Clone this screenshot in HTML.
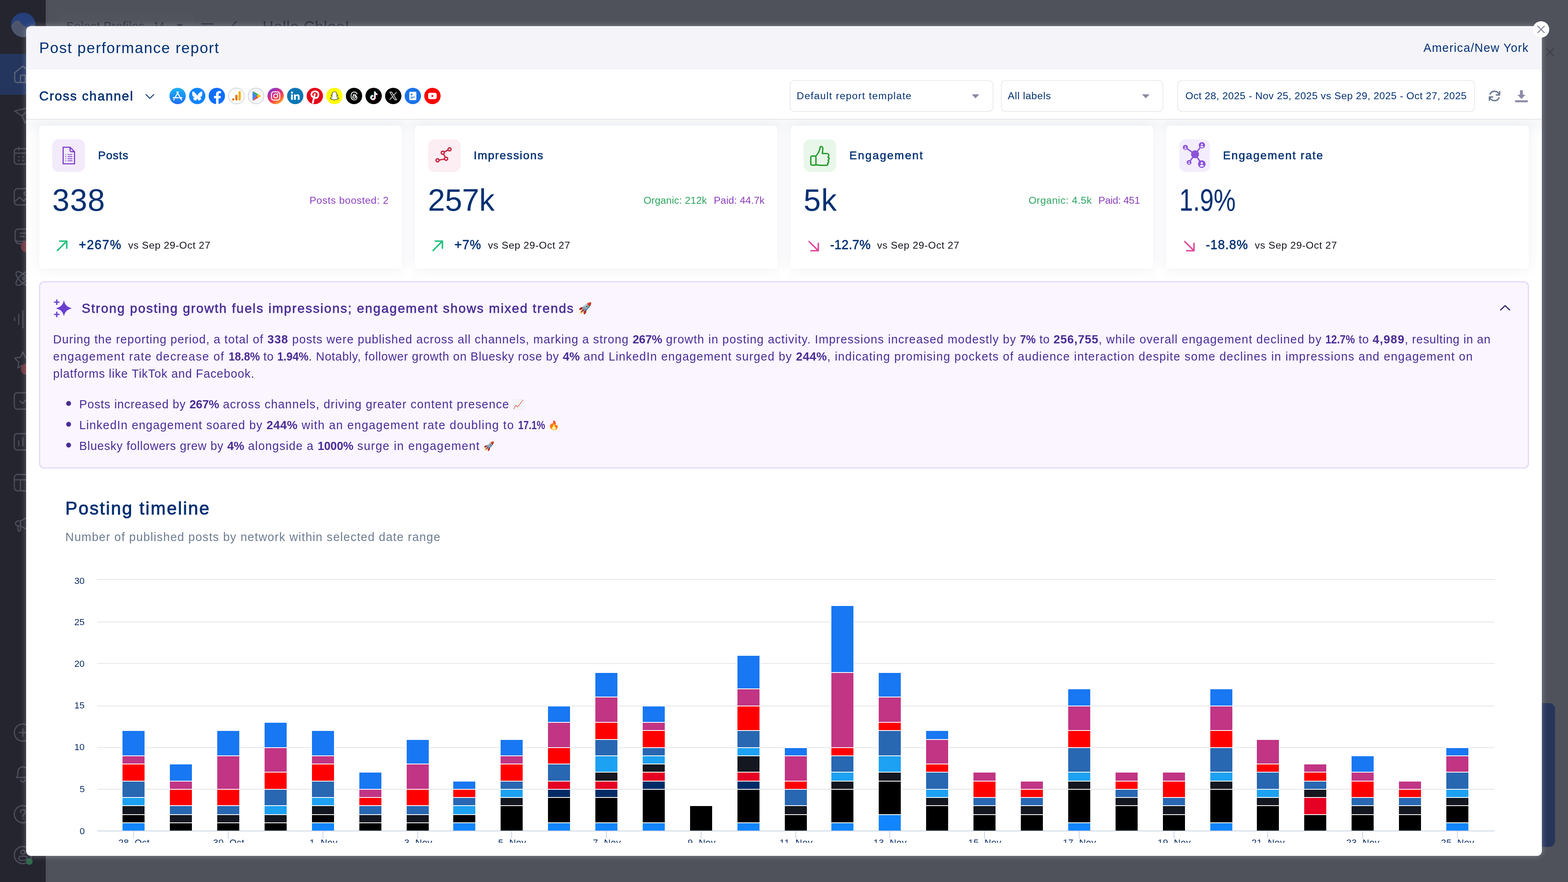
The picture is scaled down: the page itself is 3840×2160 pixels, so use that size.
<!DOCTYPE html>
<html lang="en">
<head>
<meta charset="utf-8">
<title>Post performance report</title>
<style>
*{box-sizing:border-box;margin:0;padding:0}
html,body{width:3840px;height:2160px;overflow:hidden}
body{position:relative;background:#4f525b;font-family:"Liberation Sans",sans-serif;color:#033072;-webkit-font-smoothing:antialiased}
.a{position:absolute;display:block}
.t{position:absolute;white-space:nowrap;font-weight:400;margin:0;will-change:transform}
b{font-weight:700}
ul{list-style:none}
#sidebar{left:0;top:0;width:112px;height:2160px;background:#24252f}
#modal{left:64px;top:64px;width:3712px;height:2032px;background:#fff;border-radius:12px;overflow:hidden;box-shadow:0 0 15px rgba(255,255,255,.30)}
#mc{left:-64px;top:-64px;width:3840px;height:2160px}
#hdr{left:0;top:1px;width:3712px;height:105px;background:#f4f4f9}
#bar{left:0;top:106px;width:3712px;height:123px;background:#fff;border-bottom:2px solid #e6e7ec}
#body{left:0;top:229px;width:3712px;height:1771px;overflow:hidden;background:linear-gradient(#f8f9fb,#f8f9fb 14px,#fff 40px)}
.card{position:absolute;top:15px;width:888px;height:350px;background:#fff;border-radius:8px;box-shadow:0 0 30px rgba(60,70,110,.09)}
.ib{position:absolute;left:32px;top:33px;width:80px;height:80px;border-radius:16px}
.sel{position:absolute;top:132px;height:78px;border:2px solid #eaebf0;border-radius:12px;background:#fff}
#ai{left:32px;top:396px;width:3648px;height:458px;background:#faf5ff;border:2px solid #dccdf7;border-radius:12px}
.g{position:absolute;left:174px;width:3422px;height:2px;background:#e6e6e6}
.sg{position:absolute;width:54px;box-shadow:0 0 0 2px #fff}
@media (min-resolution:1.5dppx) and (max-width:1920px){html{zoom:.5}}
</style>
</head>
<body>
<nav id="sidebar" class="a">
<div class="a" style="left:0;top:132px;width:112px;height:100px;background:#24355e"></div>
<svg class="a" style="left:27px;top:31px;border-radius:50%;background:#25407a;overflow:hidden" width="60" height="60" viewBox="0 0 60 60"><path d="M-1 33C7 21 15 15 21 21 29 31 37 39 45 33 51 28 57 29 63 35V63H-1Z" fill="#4c556b"/></svg>
<svg class="a" style="left:32px;top:158px" width="48" height="48" viewBox="0 0 48 48" fill="none" stroke="#5b6378" stroke-width="3" stroke-linecap="round" stroke-linejoin="round"><path d="M4 20 24 4l20 16v18a6 6 0 0 1-6 6H10a6 6 0 0 1-6-6z"/><path d="M18 44V28a2 2 0 0 1 2-2h8a2 2 0 0 1 2 2v16"/></svg>
<svg class="a" style="left:32px;top:258px" width="48" height="48" viewBox="0 0 48 48" fill="none" stroke="#4b4d5a" stroke-width="3" stroke-linecap="round" stroke-linejoin="round"><path d="M4 14 44 4 30 44 22 26z"/><path d="M22 26 44 4"/></svg>
<svg class="a" style="left:32px;top:358px" width="48" height="48" viewBox="0 0 48 48" fill="none" stroke="#4b4d5a" stroke-width="3" stroke-linecap="round" stroke-linejoin="round"><rect x="3" y="6" width="42" height="38" rx="7"/><path d="M3 17h42M14 2v8M34 2v8"/><g stroke-width="4"><path d="M14 26h.1M24 26h.1M34 26h.1M14 35h.1M24 35h.1M34 35h.1"/></g></svg>
<svg class="a" style="left:32px;top:458px" width="48" height="48" viewBox="0 0 48 48" fill="none" stroke="#4b4d5a" stroke-width="3" stroke-linecap="round" stroke-linejoin="round"><rect x="3" y="4" width="42" height="40" rx="8"/><circle cx="31" cy="16" r="4"/><path d="M4 36 16 25l10 9 6-5 12 10"/></svg>
<svg class="a" style="left:32px;top:558px" width="48" height="48" viewBox="0 0 48 48" fill="none" stroke="#4b4d5a" stroke-width="3" stroke-linecap="round" stroke-linejoin="round"><rect x="5" y="3" width="40" height="30" rx="7"/><path d="M17 13h18M17 21h10"/><path d="M5 26c0 8 4 13 10 13h8"/></svg>
<div class="a" style="left:51px;top:590px;width:28px;height:28px;border-radius:14px;background:#6d3540"></div>
<svg class="a" style="left:32px;top:658px" width="48" height="48" viewBox="0 0 48 48" fill="none" stroke="#4b4d5a" stroke-width="3" stroke-linecap="round" stroke-linejoin="round"><ellipse cx="24" cy="24" rx="22" ry="9" transform="rotate(45 24 24)"/><ellipse cx="24" cy="24" rx="22" ry="9" transform="rotate(-45 24 24)"/><circle cx="26" cy="24" r="3"/></svg>
<svg class="a" style="left:32px;top:758px" width="48" height="48" viewBox="0 0 48 48" fill="none" stroke="#4b4d5a" stroke-width="3" stroke-linecap="round" stroke-linejoin="round"><path d="M4 21v6M14 12v24M24 3v42M34 12v24M44 21v6"/></svg>
<svg class="a" style="left:32px;top:858px" width="48" height="48" viewBox="0 0 48 48" fill="none" stroke="#4b4d5a" stroke-width="3" stroke-linecap="round" stroke-linejoin="round"><path d="M24 4l6 13 14 2-10 10 2 14-12-7-12 7 2-14L4 19l14-2z"/></svg>
<div class="a" style="left:51px;top:890px;width:28px;height:28px;border-radius:14px;background:#6d3540"></div>
<svg class="a" style="left:32px;top:958px" width="48" height="48" viewBox="0 0 48 48" fill="none" stroke="#4b4d5a" stroke-width="3" stroke-linecap="round" stroke-linejoin="round"><rect x="3" y="4" width="42" height="40" rx="7"/><path d="M17 24l6 6 12-11"/></svg>
<svg class="a" style="left:32px;top:1058px" width="48" height="48" viewBox="0 0 48 48" fill="none" stroke="#4b4d5a" stroke-width="3" stroke-linecap="round" stroke-linejoin="round"><rect x="3" y="4" width="42" height="40" rx="7"/><path d="M14 34V22M24 34V14M34 34V26"/></svg>
<svg class="a" style="left:32px;top:1158px" width="48" height="48" viewBox="0 0 48 48" fill="none" stroke="#4b4d5a" stroke-width="3" stroke-linecap="round" stroke-linejoin="round"><rect x="3" y="4" width="42" height="40" rx="8"/><path d="M3 17h42M18 17v27"/></svg>
<svg class="a" style="left:32px;top:1258px" width="48" height="48" viewBox="0 0 48 48" fill="none" stroke="#4b4d5a" stroke-width="3" stroke-linecap="round" stroke-linejoin="round"><path d="M18 18 40 6v36L18 30z"/><path d="M18 18h-6a6 6 0 0 0 0 12h6z"/><path d="M12 30v10a3 3 0 0 0 6 0V30"/></svg>
<svg class="a" style="left:32px;top:1770px" width="48" height="48" viewBox="0 0 48 48" fill="none" stroke="#4b4d5a" stroke-width="3" stroke-linecap="round" stroke-linejoin="round"><circle cx="24" cy="24" r="21"/><path d="M24 15v18M15 24h18"/></svg>
<svg class="a" style="left:32px;top:1870px" width="48" height="48" viewBox="0 0 48 48" fill="none" stroke="#4b4d5a" stroke-width="3" stroke-linecap="round" stroke-linejoin="round"><path d="M8 34c4-4 4-8 4-14a12 12 0 0 1 24 0c0 6 0 10 4 14z"/><path d="M19 40a5 5 0 0 0 10 0"/></svg>
<svg class="a" style="left:32px;top:1970px" width="48" height="48" viewBox="0 0 48 48" fill="none" stroke="#4b4d5a" stroke-width="3" stroke-linecap="round" stroke-linejoin="round"><circle cx="24" cy="24" r="21"/><path d="M18 19a6 6 0 1 1 9 5c-2 1-3 2-3 5M24 34h.1"/></svg>
<svg class="a" style="left:32px;top:2070px" width="48" height="48" viewBox="0 0 48 48" fill="none" stroke="#4b4d5a" stroke-width="3" stroke-linecap="round" stroke-linejoin="round"><circle cx="24" cy="24" r="21"/><circle cx="24" cy="17" r="5"/><rect x="14" y="27" width="20" height="10" rx="5"/></svg>
<div class="a" style="left:64px;top:2102px;width:16px;height:16px;border-radius:8px;background:#2f6b4f"></div>
</nav>
<div class="a" style="left:145px;top:32px;width:330px;height:80px;border-radius:10px;background:#51545d"></div>
<div class="t" style="left:162.00px;top:43.00px;font-size:28.84px;line-height:42px;color:#2b2e3a;letter-spacing:0.528px;">Select Profiles</div>
<div class="t" style="left:375.50px;top:43.00px;font-size:28.84px;line-height:42px;color:#2b2e3a;transform:scaleX(0.8283);transform-origin:0 0;">14</div>
<svg class="a" style="left:431px;top:58px" width="18" height="11" viewBox="0 0 18 11"><path d="M1 1h16L9 10z" fill="#2b2e3a"/></svg>
<div class="a" style="left:493px;top:57px;width:30px;height:3px;background:#272d3d"></div>
<svg class="a" style="left:560px;top:50px" width="24" height="40" viewBox="0 0 24 40" fill="none" stroke="#272b39" stroke-width="2.600"><path d="M19 2 3 20"/></svg>
<div class="t" style="left:642.50px;top:38.44px;font-size:37.08px;line-height:54px;color:#272b39;letter-spacing:0.949px;">Hello Chloe!</div>
<svg class="a" style="left:3784px;top:116px" width="24" height="24" viewBox="0 0 24 24" fill="none" stroke="#3e414c" stroke-width="3" stroke-linecap="round"><path d="M3 3l18 18M21 3 3 21"/></svg>
<div class="a" style="left:3700px;top:1722px;width:108px;height:352px;border-radius:14px;background:#27355a"></div>
<main id="modal" class="a">
<header id="hdr" class="a">
</header>
<div id="bar" class="a"></div>
<div id="body" class="a">
<section class="card" style="left:32px"><div class="ib" style="background:#f3ebfb;width:80px"></div></section>
<section class="card" style="left:952px"><div class="ib" style="background:#fdeef3;width:80px"></div></section>
<section class="card" style="left:1872px"><div class="ib" style="background:#e9f7ea;width:80px"></div></section>
<section class="card" style="left:2792px"><div class="ib" style="background:#f3edfd;width:75px"></div></section>
<section id="ai" class="a"></section>
</div>
<div id="mc" class="a">
<h1 class="t" style="left:96.00px;top:89.74px;font-size:37.08px;line-height:54px;color:#033072;letter-spacing:1.82px;">Post performance report</h1>
<div class="t" style="left:3485.73px;top:95.80px;font-size:28.84px;line-height:42px;color:#033072;letter-spacing:1.416px;">America/New York</div>
<h2 class="t" style="left:96.00px;top:211.11px;font-size:32.0px;line-height:48px;color:#033072;letter-spacing:2.06px;-webkit-text-stroke:0.77px #033072;">Cross channel</h2>
<svg class="a" style="left:354px;top:227px" width="26" height="18" viewBox="0 0 26 18" fill="none" stroke="#033072" stroke-width="2.200" stroke-linecap="round" stroke-linejoin="round"><path d="M3.500 4.500 13 14l9.500-9.500"/></svg>
<svg class="a" style="left:415px;top:215px;border-radius:50%;background:linear-gradient(180deg,#1ab1f8,#1f6ff0)" width="40" height="40" viewBox="0 0 40 40"><g stroke="#fff" stroke-width="2.6" stroke-linecap="round" fill="none"><path d="M21.6 10.2 13.4 24.4M18.4 10.2l9 15.6M9.4 24.4h12.2M24.6 24.4h6M11.6 27.6l-1.2 2.1M27.6 26l2 3.6"/></g></svg>
<svg class="a" style="left:463px;top:215px;" width="40" height="40" viewBox="0 0 40 40"><circle cx="20" cy="20" r="20" fill="#1185fe"/><path fill="#fff" transform="translate(7.600 9.300) scale(.0437)" d="M123.121 33.664C188.241 82.553 258.281 181.680 284 234.873c25.719-53.192 95.759-152.320 160.879-201.210C491.866-1.611 568-28.906 568 57.947c0 17.346-9.945 145.713-15.778 166.555-20.275 72.453-94.155 90.933-159.875 79.748C507.222 323.800 536.444 388.560 473.333 453.320c-119.860 122.992-172.272-30.859-185.702-70.281-2.462-7.227-3.614-10.608-3.631-7.733-.017-2.875-1.169.506-3.631 7.733-13.430 39.422-65.842 193.273-185.702 70.281-63.111-64.760-33.890-129.520 80.986-149.071-65.720 11.185-139.600-7.295-159.875-79.748C9.945 203.659 0 75.291 0 57.946 0-28.906 76.135-1.612 123.121 33.664Z"/></svg>
<svg class="a" style="left:511px;top:215px;" width="40" height="40" viewBox="0 0 40 40"><circle cx="20" cy="20" r="20" fill="#0d6efd"/><path fill="#fff" d="M27.8 25.8l.9-5.800h-5.500v-3.700c0-1.600.8-3.100 3.300-3.100h2.500V8.300s-2.300-.4-4.500-.4c-4.600 0-7.600 2.800-7.600 7.800V20h-5v5.800h5V40c1 .15 2 .2 3.100.2s2.100-.1 3.100-.2V25.800z" transform="translate(1.200 0)"/></svg>
<svg class="a" style="left:559px;top:215px;" width="40" height="40" viewBox="0 0 40 40"><circle cx="20" cy="20" r="19.300" fill="#fff" stroke="#b9bdc9" stroke-width="1.200"/><rect x="25.200" y="8.200" width="5.400" height="23" rx="2.700" fill="#f9ab00"/><rect x="17.300" y="17" width="5.400" height="14.200" rx="2.700" fill="#e37400"/><circle cx="12.200" cy="28.500" r="2.700" fill="#e37400"/></svg>
<svg class="a" style="left:607px;top:215px;" width="40" height="40" viewBox="0 0 40 40"><circle cx="20" cy="20" r="19.300" fill="#f4f6fb" stroke="#b9bdc9" stroke-width="1.200"/><path d="M12 9.400 21.500 20 12 30.600c-.4-.3-.6-.8-.6-1.500V10.900c0-.7.2-1.200.6-1.500z" fill="#4285f4"/><path d="M12 9.400c.5-.4 1.300-.4 2.100.1l11.200 6.400-3.800 4.100z" fill="#34a853"/><path d="M25.300 15.900 30.600 19c1.200.7 1.200 1.700 0 2.400l-5.300 3.100L21.500 20z" fill="#fbbc04"/><path d="M25.300 24.500 14.100 30.900c-.8.500-1.600.5-2.100.1L21.500 20z" fill="#ea4335"/></svg>
<svg class="a" style="left:655px;top:215px;border-radius:50%;background:linear-gradient(325deg,#fdc33b 8%,#f6593a 32%,#d52d88 58%,#7a3fd6 92%)" width="40" height="40" viewBox="0 0 40 40"><rect x="9.800" y="9.800" width="20.400" height="20.400" rx="5.600" fill="none" stroke="#fff" stroke-width="2.300"/><circle cx="20" cy="20" r="4.900" fill="none" stroke="#fff" stroke-width="2.300"/><circle cx="25.700" cy="14.300" r="1.400" fill="#fff"/></svg>
<svg class="a" style="left:703px;top:215px;" width="40" height="40" viewBox="0 0 40 40"><circle cx="20" cy="20" r="20" fill="#0a76b4"/><g fill="#fff"><rect x="9.800" y="16.300" width="4.400" height="13.200"/><circle cx="12" cy="11.700" r="2.600"/><path d="M17 16.300h4.200v1.900c.7-1.300 2.300-2.300 4.500-2.300 4.200 0 5 2.700 5 6.300v7.300h-4.400v-6.400c0-1.600 0-3.500-2.200-3.500s-2.600 1.700-2.600 3.400v6.500H17z"/></g></svg>
<svg class="a" style="left:751px;top:215px;" width="40" height="40" viewBox="0 0 40 40"><circle cx="20" cy="20" r="20" fill="#e60019"/><g fill="none" stroke="#fff" stroke-linecap="round"><path d="M14.300 22.200C12.600 20.800 11.700 18.700 11.700 16.500 11.700 11.800 15.400 8.600 20.500 8.600 25.400 8.600 28.900 11.900 28.900 16.300 28.900 21.200 26.200 24.900 22.400 24.900 20.600 24.900 19.200 24 18.600 22.700" stroke-width="4.200"/><path d="M19.800 15.500 15.200 36.500" stroke-width="4.400"/></g></svg>
<svg class="a" style="left:799px;top:215px;" width="40" height="40" viewBox="0 0 40 40"><circle cx="20" cy="20" r="20" fill="#fffc00"/><path fill="#fff" stroke="#111" stroke-width="1.100" stroke-linejoin="round" d="M20 9.500c3.300 0 5.600 2.500 5.600 5.800 0 1-.05 1.900-.1 2.600.6.3 1.400-.3 2-.1.700.2.900.9.400 1.400-.6.600-1.700.8-2.100 1.300-.3.400.2 1.300.9 2.300.8 1.100 1.900 1.900 3.200 2.300.5.150.6.700.2 1-.7.500-1.800.7-2.600.9-.3.100-.2.900-.6 1.200-.5.400-1.500-.1-2.600.1-1.300.2-2.200 1.700-4.300 1.700s-3-1.500-4.300-1.700c-1.100-.2-2.100.3-2.600-.1-.4-.3-.3-1.100-.6-1.200-.8-.2-1.900-.4-2.600-.9-.4-.3-.3-.85.2-1 1.300-.4 2.400-1.200 3.200-2.300.7-1 1.200-1.900.9-2.300-.4-.5-1.500-.7-2.100-1.300-.5-.5-.3-1.200.4-1.400.6-.2 1.400.4 2 .1-.05-.7-.1-1.600-.1-2.600 0-3.300 2.300-5.800 5.600-5.800z"/></svg>
<svg class="a" style="left:847px;top:215px;" width="40" height="40" viewBox="0 0 40 40"><circle cx="20" cy="20" r="20" fill="#000"/><path fill="none" stroke="#fff" stroke-width="2" stroke-linecap="round" d="M27.300 15.200c-.9-3.200-3.300-5-6.900-5-4.900 0-7.700 3.500-7.700 9.800s2.800 9.800 7.700 9.800c4 0 6.700-2.300 6.700-5.400 0-3-2.400-4.700-5.800-4.700-2.700 0-4.500 1.200-4.500 3.100 0 1.700 1.400 2.800 3.400 2.800 2.700 0 4.200-1.900 4.200-5.300 0-2.600-1.200-4-3.500-4-1.400 0-2.500.6-3.100 1.600"/></svg>
<svg class="a" style="left:895px;top:215px;" width="40" height="40" viewBox="0 0 40 40"><circle cx="20" cy="20" r="20" fill="#000"/><path d="M21.600 9.500h3.200c.2 2.600 1.700 4.400 4.300 4.700v3.300c-1.600 0-3-.5-4.300-1.300v7.300c0 3.900-2.800 6.700-6.500 6.700-3.500 0-6.200-2.700-6.200-6.100 0-3.700 3.100-6.500 7-6v3.400c-1.900-.5-3.600.8-3.600 2.600 0 1.500 1.200 2.700 2.800 2.700 1.800 0 3.300-1.300 3.300-3.500z" fill="#25f4ee" transform="translate(-.8 -.7)"/><path d="M21.600 9.500h3.200c.2 2.600 1.700 4.400 4.300 4.700v3.300c-1.600 0-3-.5-4.300-1.300v7.300c0 3.900-2.800 6.700-6.500 6.700-3.500 0-6.200-2.700-6.200-6.100 0-3.700 3.100-6.500 7-6v3.400c-1.900-.5-3.600.8-3.600 2.600 0 1.500 1.200 2.700 2.800 2.700 1.800 0 3.300-1.300 3.300-3.500z" fill="#fe2c55" transform="translate(.8 .7)"/><path d="M21.600 9.500h3.200c.2 2.600 1.700 4.400 4.300 4.700v3.300c-1.600 0-3-.5-4.300-1.300v7.300c0 3.900-2.800 6.700-6.500 6.700-3.500 0-6.200-2.700-6.200-6.100 0-3.700 3.100-6.500 7-6v3.400c-1.900-.5-3.600.8-3.600 2.600 0 1.500 1.200 2.700 2.800 2.700 1.800 0 3.300-1.300 3.300-3.500z" fill="#fff"/></svg>
<svg class="a" style="left:943px;top:215px;" width="40" height="40" viewBox="0 0 40 40"><circle cx="20" cy="20" r="20" fill="#000"/><path fill="none" stroke="#fff" stroke-width="1.500" stroke-linejoin="miter" d="M11.700 10.500h4.600l12 19h-4.600zM11.200 29.500l7.600-8.600M21.400 18.300l6.900-7.800"/></svg>
<svg class="a" style="left:991px;top:215px;" width="40" height="40" viewBox="0 0 40 40"><circle cx="20" cy="20" r="20" fill="#1a73e8"/><rect x="11.400" y="9.800" width="17.200" height="20.400" rx="2.400" fill="#fff"/><circle cx="17" cy="16.400" r="2.200" fill="#1a73e8"/><rect x="14.600" y="22" width="10.400" height="1.800" fill="#1a73e8"/><rect x="14.600" y="25.300" width="5.400" height="1.500" fill="#1a73e8"/></svg>
<svg class="a" style="left:1039px;top:215px;" width="40" height="40" viewBox="0 0 40 40"><circle cx="20" cy="20" r="20" fill="#ff0000"/><rect x="9.400" y="12.300" width="21.200" height="15.400" rx="4.400" fill="#fff"/><path d="M18 16.700 23.800 20 18 23.300z" fill="#ff0000"/></svg>
<div class="sel a" style="left:1934px;top:196px;width:499px"></div>
<div class="t" style="left:1951.00px;top:216.63px;font-size:24.72px;line-height:36px;color:#033072;letter-spacing:1.337px;">Default report template</div>
<svg class="a" style="left:2380px;top:230px" width="18" height="11" viewBox="0 0 18 11"><path d="M1.500 1h15a.8.8 0 0 1 .6 1.300L9.600 10.300a.8.800 0 0 1-1.200 0L.9 2.300A.8.800 0 0 1 1.500 1z" fill="#8b8ba7"/></svg>
<div class="sel a" style="left:2451px;top:196px;width:398px"></div>
<div class="t" style="left:2468.00px;top:216.63px;font-size:24.72px;line-height:36px;color:#033072;letter-spacing:0.713px;">All labels</div>
<svg class="a" style="left:2797px;top:230px" width="18" height="11" viewBox="0 0 18 11"><path d="M1.500 1h15a.8.8 0 0 1 .6 1.300L9.600 10.300a.8.800 0 0 1-1.200 0L.9 2.300A.8.800 0 0 1 1.500 1z" fill="#8b8ba7"/></svg>
<div class="sel a" style="left:2883px;top:196px;width:729px"></div>
<div class="t" style="left:2902.50px;top:216.63px;font-size:24.72px;line-height:36px;color:#033072;letter-spacing:0.507px;">Oct 28, 2025 - Nov 25, 2025 vs Sep 29, 2025 - Oct 27, 2025</div>
<svg class="a" style="left:3644px;top:219px" width="32" height="32" viewBox="0 0 32 32" fill="none" stroke="#6b7990" stroke-width="3.300" stroke-linecap="round" stroke-linejoin="round"><path d="M27.800 13A12.300 12.300 0 0 0 5 11.500"/><path d="M4.200 19A12.300 12.300 0 0 0 27 20.500"/><path d="M28.500 5.500v8h-8"/><path d="M3.500 26.500v-8h8"/></svg>
<svg class="a" style="left:3709px;top:219px" width="34" height="34" viewBox="0 0 34 34"><path d="M13.500 2h7v11h6.200L17 23.500 7.300 13h6.200z" fill="#8b8ba7"/><rect x="1" y="26.500" width="32" height="5" rx="2.500" fill="#8b8ba7"/></svg>
<svg class="a" style="left:128px;top:341px" width="80" height="80" viewBox="0 0 80 80"><g fill="none" stroke="#8040c8" stroke-width="2.800" stroke-linejoin="miter"><path d="M26.700 19.700H43.600L54.500 30.500V60.100H26.700Z"/><path d="M43.600 19.700V27.500a3 3 0 0 0 3 3H54.500"/></g><g stroke="#8040c8" stroke-width="1.900"><path d="M37.600 37.400H49.400M37.600 42.500H49.400M37.600 47.700H49.400M37.600 52.800H49.400"/><path d="M32 37.400h2.200M32 42.500h2.200M32 47.700h2.200M32 52.800h2.200"/></g></svg>
<h3 class="t" style="left:240.00px;top:359.59px;font-size:28.0px;line-height:42px;color:#033072;letter-spacing:0.963px;-webkit-text-stroke:0.67px #033072;">Posts</h3>
<div class="t" style="left:128.00px;top:435.59px;font-size:75.6px;line-height:108px;color:#033072;letter-spacing:1.371px;">338</div>
<div class="t" style="left:757.91px;top:473.03px;font-size:24.72px;line-height:36px;color:#8a3fbc;letter-spacing:0.621px;">Posts boosted: 2</div>
<svg class="a" style="left:136px;top:586px" width="32" height="32" viewBox="0 0 32 32" fill="none" stroke="#1fbf7c" stroke-width="3.600" stroke-linecap="round" stroke-linejoin="round"><path d="M4.500 27.500 26.500 5.500M10 4.500h17.500V22"/></svg>
<div class="t" style="left:193.00px;top:576.35px;font-size:30.72px;line-height:48px;color:#033072;letter-spacing:1.735px;-webkit-text-stroke:0.77px #033072;">+267%</div>
<div class="t" style="left:314.18px;top:583.03px;font-size:24.72px;line-height:36px;color:#12141c;letter-spacing:0.665px;">vs Sep 29-Oct 27</div>
<svg class="a" style="left:1048px;top:341px" width="80" height="80" viewBox="0 0 80 80"><g fill="none" stroke="#c9223f" stroke-width="3.200"><circle cx="52.900" cy="24.700" r="3.800"/><circle cx="36.300" cy="32.900" r="3.800"/><circle cx="44.500" cy="47.800" r="3.800"/><circle cx="23.500" cy="51.700" r="3.800"/><path d="M49.500 26.400 39.700 31.200M38.100 36.200 42.700 44.500M40.800 48.500 27.200 51"/></g></svg>
<h3 class="t" style="left:1160.00px;top:359.59px;font-size:28.0px;line-height:42px;color:#033072;letter-spacing:1.895px;-webkit-text-stroke:0.67px #033072;">Impressions</h3>
<div class="t" style="left:1048.00px;top:435.59px;font-size:75.6px;line-height:108px;color:#033072;letter-spacing:-0.232px;">257k</div>
<div class="t" style="left:1747.54px;top:473.03px;font-size:24.72px;line-height:36px;color:#8a3fbc;letter-spacing:0.071px;">Paid: 44.7k</div>
<div class="t" style="left:1576.28px;top:473.03px;font-size:24.72px;line-height:36px;color:#2ba45f;letter-spacing:0.105px;">Organic: 212k</div>
<svg class="a" style="left:1056px;top:586px" width="32" height="32" viewBox="0 0 32 32" fill="none" stroke="#1fbf7c" stroke-width="3.600" stroke-linecap="round" stroke-linejoin="round"><path d="M4.500 27.500 26.500 5.500M10 4.500h17.500V22"/></svg>
<div class="t" style="left:1113.00px;top:576.35px;font-size:30.72px;line-height:48px;color:#033072;letter-spacing:1.279px;-webkit-text-stroke:0.77px #033072;">+7%</div>
<div class="t" style="left:1195.18px;top:583.03px;font-size:24.72px;line-height:36px;color:#12141c;letter-spacing:0.665px;">vs Sep 29-Oct 27</div>
<svg class="a" style="left:1968px;top:341px" width="80" height="80" viewBox="0 0 80 80"><g fill="none" stroke="#1e9a24" stroke-width="3.200" stroke-linejoin="round" stroke-linecap="round"><rect x="17.600" y="41.200" width="12.600" height="22.300" rx="3"/><path d="M30.500 40.500C36 34.500 39.800 27 40.300 20.500 40.500 18 41.800 17.400 43.300 17.700 46.300 18.300 47.600 21 47 25.500L45.800 35H56C60.300 35 62.200 37.600 61.700 40.400 61.400 42.200 60.700 43.200 59.700 43.600 61.700 44.400 62.500 46.400 62.100 48.400 61.800 50 61 51 59.900 51.400 61.200 52.400 61.700 53.900 61.300 55.600 60.900 57.300 60 58.300 58.700 58.600 59.500 59.600 59.700 60.800 59.200 61.900 58.500 63.500 56.700 63.800 54.200 63.800 46 64 37 63.800 30.500 62.600"/></g></svg>
<h3 class="t" style="left:2080.00px;top:359.59px;font-size:28.0px;line-height:42px;color:#033072;letter-spacing:2.324px;-webkit-text-stroke:0.67px #033072;">Engagement</h3>
<div class="t" style="left:1968.00px;top:435.59px;font-size:75.6px;line-height:108px;color:#033072;letter-spacing:1.225px;">5k</div>
<div class="t" style="left:2690.38px;top:473.03px;font-size:24.72px;line-height:36px;color:#8a3fbc;letter-spacing:-0.316px;">Paid: 451</div>
<div class="t" style="left:2519.20px;top:473.03px;font-size:24.72px;line-height:36px;color:#2ba45f;letter-spacing:0.628px;">Organic: 4.5k</div>
<svg class="a" style="left:1976px;top:586px" width="32" height="32" viewBox="0 0 32 32" fill="none" stroke="#e0479a" stroke-width="3.600" stroke-linecap="round" stroke-linejoin="round"><path d="M5.500 5.500 27.500 27.500M28 10v18H10"/></svg>
<div class="t" style="left:2033.00px;top:576.35px;font-size:30.72px;line-height:48px;color:#033072;letter-spacing:0.348px;-webkit-text-stroke:0.77px #033072;">-12.7%</div>
<div class="t" style="left:2148.42px;top:583.03px;font-size:24.72px;line-height:36px;color:#12141c;letter-spacing:0.665px;">vs Sep 29-Oct 27</div>
<svg class="a" style="left:2888px;top:341px" width="80" height="80" viewBox="0 0 80 80"><g stroke="#8c52d9" stroke-width="3.300" fill="none"><path d="M15 20 38.600 36.800M55.400 14.700 38.600 36.800M24 56.800 38.600 36.800M55.200 60.800 38.600 36.800"/></g><g fill="#8c52d9"><circle cx="38.600" cy="36.800" r="9.800"/><circle cx="15" cy="20" r="6.200"/><circle cx="55.400" cy="14.700" r="7.700"/><circle cx="24" cy="56.800" r="5.800"/><circle cx="55.200" cy="60.800" r="9.300"/></g><g fill="#f3edfd"><circle cx="15" cy="18.600" r="1.700"/><ellipse cx="15" cy="22.700" rx="3" ry="1.500"/><circle cx="55.400" cy="12.900" r="2.200"/><ellipse cx="55.400" cy="18.200" rx="3.900" ry="1.900"/><circle cx="24" cy="55.500" r="1.600"/><ellipse cx="24" cy="59.300" rx="2.800" ry="1.400"/><circle cx="55.200" cy="58.600" r="2.700"/><ellipse cx="55.200" cy="65" rx="4.700" ry="2.300"/></g></svg>
<h3 class="t" style="left:2995.00px;top:359.59px;font-size:28.0px;line-height:42px;color:#033072;letter-spacing:2.128px;-webkit-text-stroke:0.67px #033072;">Engagement rate</h3>
<div class="t" style="left:2888.00px;top:435.59px;font-size:75.6px;line-height:108px;color:#033072;transform:scaleX(0.8018);transform-origin:0 0;">1.9%</div>
<svg class="a" style="left:2896px;top:586px" width="32" height="32" viewBox="0 0 32 32" fill="none" stroke="#e0479a" stroke-width="3.600" stroke-linecap="round" stroke-linejoin="round"><path d="M5.500 5.500 27.500 27.500M28 10v18H10"/></svg>
<div class="t" style="left:2953.00px;top:576.35px;font-size:30.72px;line-height:48px;color:#033072;letter-spacing:1.089px;-webkit-text-stroke:0.77px #033072;">-18.8%</div>
<div class="t" style="left:3072.87px;top:583.03px;font-size:24.72px;line-height:36px;color:#12141c;letter-spacing:0.665px;">vs Sep 29-Oct 27</div>
<svg class="a" style="left:130px;top:731px" width="48" height="48" viewBox="0 0 48 48"><path d="M26.500 4C28.500 14.500 33.500 20.500 46 24 33.500 27.500 28.500 33.500 26.500 44 24.500 33.500 19.500 27.500 7 24 19.500 20.500 24.500 14.500 26.500 4z" fill="#6a3fd0"/><g stroke="#6a3fd0" stroke-width="3.200" stroke-linecap="round"><path d="M9 3.500v11M3.500 9h11M9 33.500v11M3.500 39h11"/></g></svg>
<h2 class="t" style="left:200.00px;top:731.41px;font-size:32.0px;line-height:48px;color:#4a2c96;letter-spacing:2.168px;-webkit-text-stroke:0.77px #4a2c96;">Strong posting growth fuels impressions; engagement shows mixed trends</h2>
<span class="t" style="left:1415.5px;top:737px;font-size:27px;line-height:36px">🚀</span>
<svg class="a" style="left:3671px;top:743px" width="30" height="22" viewBox="0 0 30 22" fill="none" stroke="#33257a" stroke-width="3" stroke-linecap="round" stroke-linejoin="round"><path d="M4 16 15 5.500 26 16"/></svg>
<p class="t" style="left:130px;top:810.00px;font-size:28.84px;line-height:42px;color:#4a2c96"><span style="letter-spacing:1.179px">During the reporting period, a total of </span><b style="letter-spacing:1.143px">338</b><span style="letter-spacing:1.202px"> posts were published across all channels, marking a strong </span><b style="letter-spacing:-0.303px">267%</b><span style="letter-spacing:1.309px"> growth in posting activity. Impressions increased modestly by </span><b style="display:inline-block;transform:scaleX(0.9250);transform-origin:0 50%;margin-right:-3.13px">7%</b><span style="letter-spacing:0.747px"> to </span><b style="letter-spacing:0.899px">256,755</b><span style="letter-spacing:1.314px">, while overall engagement declined by </span><b style="display:inline-block;transform:scaleX(0.8810);transform-origin:0 50%;margin-right:-9.73px">12.7%</b><span style="letter-spacing:0.747px"> to </span><b style="letter-spacing:1.302px">4,989</b><span style="letter-spacing:0.894px">, resulting in an</span><br><span style="letter-spacing:1.603px">engagement rate decrease of </span><b style="display:inline-block;transform:scaleX(0.9372);transform-origin:0 50%;margin-right:-5.14px">18.8%</b><span style="letter-spacing:0.747px"> to </span><b style="display:inline-block;transform:scaleX(0.9375);transform-origin:0 50%;margin-right:-5.11px">1.94%</b><span style="letter-spacing:0.895px">. Notably, follower growth on Bluesky rose by </span><b style="letter-spacing:0.019px">4%</b><span style="letter-spacing:1.299px"> and LinkedIn engagement surged by </span><b style="letter-spacing:0.635px">244%</b><span style="letter-spacing:1.43px">, indicating promising pockets of audience interaction despite some declines in impressions and engagement on</span><br><span style="letter-spacing:1.005px">platforms like TikTok and Facebook.</span></p>
<ul>
<li class="t" style="left:194px;top:969.00px;font-size:28.84px;line-height:42px;color:#4a2c96"><span style="letter-spacing:0.971px">Posts increased by </span><b style="letter-spacing:-0.303px">267%</b><span style="letter-spacing:1.305px"> across channels, driving greater content presence</span><span style="font-size:21.500px;margin-left:8px;position:relative;top:-2px">📈</span></li>
<div class="a" style="left:162px;top:982px;width:12px;height:12px;border-radius:6px;background:#4a2c96"></div>
<li class="t" style="left:194px;top:1020.00px;font-size:28.84px;line-height:42px;color:#4a2c96"><span style="letter-spacing:1.296px">LinkedIn engagement soared by </span><b style="letter-spacing:0.635px">244%</b><span style="letter-spacing:1.557px"> with an engagement rate doubling to </span><b style="display:inline-block;transform:scaleX(0.8084);transform-origin:0 50%;margin-right:-15.67px">17.1%</b><span style="font-size:21.500px;margin-left:8px;position:relative;top:-2px">🔥</span></li>
<div class="a" style="left:162px;top:1033px;width:12px;height:12px;border-radius:6px;background:#4a2c96"></div>
<li class="t" style="left:194px;top:1071.00px;font-size:28.84px;line-height:42px;color:#4a2c96"><span style="letter-spacing:0.878px">Bluesky followers grew by </span><b style="letter-spacing:0.019px">4%</b><span style="letter-spacing:1.245px"> alongside a </span><b style="display:inline-block;transform:scaleX(0.9756);transform-origin:0 50%;margin-right:-2.19px">1000%</b><span style="letter-spacing:1.563px"> surge in engagement</span><span style="font-size:21.500px;margin-left:8px;position:relative;top:-2px">🚀</span></li>
<div class="a" style="left:162px;top:1084px;width:12px;height:12px;border-radius:6px;background:#4a2c96"></div>
</ul>
<h2 class="t" style="left:160.00px;top:1212.25px;font-size:44.0px;line-height:66px;color:#033072;letter-spacing:2.796px;-webkit-text-stroke:1.06px #033072;">Posting timeline</h2>
<p class="t" style="left:160.00px;top:1294.00px;font-size:28.84px;line-height:42px;color:#6c7b90;letter-spacing:1.365px;">Number of published posts by network within selected date range</p>
<div id="chart" class="a" style="left:0;top:0;width:3840px;height:2064px;overflow:hidden">
<div class="g" style="left:238px;top:1418px"></div>
<div class="g" style="left:238px;top:1522px"></div>
<div class="g" style="left:238px;top:1624px"></div>
<div class="g" style="left:238px;top:1728px"></div>
<div class="g" style="left:238px;top:1830px"></div>
<div class="g" style="left:238px;top:1932px"></div>
<div class="t" style="left:182.33px;top:1405.64px;font-size:22.66px;line-height:33px;color:#0b2c66;letter-spacing:-0.019px;">30</div>
<div class="t" style="left:182.33px;top:1507.34px;font-size:22.66px;line-height:33px;color:#0b2c66;letter-spacing:-0.019px;">25</div>
<div class="t" style="left:182.33px;top:1609.34px;font-size:22.66px;line-height:33px;color:#0b2c66;letter-spacing:-0.019px;">20</div>
<div class="t" style="left:182.33px;top:1711.14px;font-size:22.66px;line-height:33px;color:#0b2c66;letter-spacing:-0.019px;">15</div>
<div class="t" style="left:182.33px;top:1813.34px;font-size:22.66px;line-height:33px;color:#0b2c66;letter-spacing:-0.019px;">10</div>
<div class="t" style="left:194.92px;top:1915.94px;font-size:22.66px;line-height:33px;color:#0b2c66;letter-spacing:-0.019px;">5</div>
<div class="t" style="left:194.92px;top:2019.04px;font-size:22.66px;line-height:33px;color:#0b2c66;letter-spacing:-0.019px;">0</div>
<i class="sg a" style="left:300px;top:2016px;height:18px;background:#1185fe"></i><i class="sg a" style="left:300px;top:1996px;height:18px;background:#000000"></i><i class="sg a" style="left:300px;top:1974px;height:20px;background:#14171f"></i><i class="sg a" style="left:300px;top:1954px;height:18px;background:#1da1f2"></i><i class="sg a" style="left:300px;top:1914px;height:38px;background:#2867b2"></i><i class="sg a" style="left:300px;top:1872px;height:40px;background:#ff0000"></i><i class="sg a" style="left:300px;top:1852px;height:18px;background:#c13584"></i><i class="sg a" style="left:300px;top:1790px;height:60px;background:#1877f2"></i>
<i class="sg a" style="left:416px;top:2016px;height:18px;background:#000000"></i><i class="sg a" style="left:416px;top:1996px;height:18px;background:#14171f"></i><i class="sg a" style="left:416px;top:1974px;height:20px;background:#2867b2"></i><i class="sg a" style="left:416px;top:1934px;height:38px;background:#ff0000"></i><i class="sg a" style="left:416px;top:1914px;height:18px;background:#c13584"></i><i class="sg a" style="left:416px;top:1872px;height:40px;background:#1877f2"></i>
<i class="sg a" style="left:532px;top:2016px;height:18px;background:#000000"></i><i class="sg a" style="left:532px;top:1996px;height:18px;background:#14171f"></i><i class="sg a" style="left:532px;top:1974px;height:20px;background:#2867b2"></i><i class="sg a" style="left:532px;top:1934px;height:38px;background:#ff0000"></i><i class="sg a" style="left:532px;top:1852px;height:80px;background:#c13584"></i><i class="sg a" style="left:532px;top:1790px;height:60px;background:#1877f2"></i>
<i class="sg a" style="left:648px;top:2016px;height:18px;background:#000000"></i><i class="sg a" style="left:648px;top:1996px;height:18px;background:#14171f"></i><i class="sg a" style="left:648px;top:1974px;height:20px;background:#1da1f2"></i><i class="sg a" style="left:648px;top:1934px;height:38px;background:#2867b2"></i><i class="sg a" style="left:648px;top:1892px;height:40px;background:#ff0000"></i><i class="sg a" style="left:648px;top:1832px;height:58px;background:#c13584"></i><i class="sg a" style="left:648px;top:1770px;height:60px;background:#1877f2"></i>
<i class="sg a" style="left:764px;top:2016px;height:18px;background:#1185fe"></i><i class="sg a" style="left:764px;top:1996px;height:18px;background:#000000"></i><i class="sg a" style="left:764px;top:1974px;height:20px;background:#14171f"></i><i class="sg a" style="left:764px;top:1954px;height:18px;background:#1da1f2"></i><i class="sg a" style="left:764px;top:1914px;height:38px;background:#2867b2"></i><i class="sg a" style="left:764px;top:1872px;height:40px;background:#ff0000"></i><i class="sg a" style="left:764px;top:1852px;height:18px;background:#c13584"></i><i class="sg a" style="left:764px;top:1790px;height:60px;background:#1877f2"></i>
<i class="sg a" style="left:880px;top:2016px;height:18px;background:#000000"></i><i class="sg a" style="left:880px;top:1996px;height:18px;background:#14171f"></i><i class="sg a" style="left:880px;top:1974px;height:20px;background:#2867b2"></i><i class="sg a" style="left:880px;top:1954px;height:18px;background:#ff0000"></i><i class="sg a" style="left:880px;top:1934px;height:18px;background:#c13584"></i><i class="sg a" style="left:880px;top:1892px;height:40px;background:#1877f2"></i>
<i class="sg a" style="left:996px;top:2016px;height:18px;background:#000000"></i><i class="sg a" style="left:996px;top:1996px;height:18px;background:#14171f"></i><i class="sg a" style="left:996px;top:1974px;height:20px;background:#2867b2"></i><i class="sg a" style="left:996px;top:1934px;height:38px;background:#ff0000"></i><i class="sg a" style="left:996px;top:1872px;height:60px;background:#c13584"></i><i class="sg a" style="left:996px;top:1812px;height:58px;background:#1877f2"></i>
<i class="sg a" style="left:1110px;top:2016px;height:18px;background:#1185fe"></i><i class="sg a" style="left:1110px;top:1996px;height:18px;background:#000000"></i><i class="sg a" style="left:1110px;top:1974px;height:20px;background:#1da1f2"></i><i class="sg a" style="left:1110px;top:1954px;height:18px;background:#2867b2"></i><i class="sg a" style="left:1110px;top:1934px;height:18px;background:#ff0000"></i><i class="sg a" style="left:1110px;top:1914px;height:18px;background:#1877f2"></i>
<i class="sg a" style="left:1226px;top:1974px;height:60px;background:#000000"></i><i class="sg a" style="left:1226px;top:1954px;height:18px;background:#14171f"></i><i class="sg a" style="left:1226px;top:1934px;height:18px;background:#1da1f2"></i><i class="sg a" style="left:1226px;top:1914px;height:18px;background:#2867b2"></i><i class="sg a" style="left:1226px;top:1872px;height:40px;background:#ff0000"></i><i class="sg a" style="left:1226px;top:1852px;height:18px;background:#c13584"></i><i class="sg a" style="left:1226px;top:1812px;height:38px;background:#1877f2"></i>
<i class="sg a" style="left:1342px;top:2016px;height:18px;background:#1185fe"></i><i class="sg a" style="left:1342px;top:1954px;height:60px;background:#000000"></i><i class="sg a" style="left:1342px;top:1934px;height:18px;background:#002b66"></i><i class="sg a" style="left:1342px;top:1914px;height:18px;background:#e60023"></i><i class="sg a" style="left:1342px;top:1872px;height:40px;background:#2867b2"></i><i class="sg a" style="left:1342px;top:1832px;height:38px;background:#ff0000"></i><i class="sg a" style="left:1342px;top:1770px;height:60px;background:#c13584"></i><i class="sg a" style="left:1342px;top:1730px;height:38px;background:#1877f2"></i>
<i class="sg a" style="left:1458px;top:2016px;height:18px;background:#1185fe"></i><i class="sg a" style="left:1458px;top:1954px;height:60px;background:#000000"></i><i class="sg a" style="left:1458px;top:1934px;height:18px;background:#002b66"></i><i class="sg a" style="left:1458px;top:1914px;height:18px;background:#e60023"></i><i class="sg a" style="left:1458px;top:1892px;height:20px;background:#14171f"></i><i class="sg a" style="left:1458px;top:1852px;height:38px;background:#1da1f2"></i><i class="sg a" style="left:1458px;top:1812px;height:38px;background:#2867b2"></i><i class="sg a" style="left:1458px;top:1770px;height:40px;background:#ff0000"></i><i class="sg a" style="left:1458px;top:1708px;height:60px;background:#c13584"></i><i class="sg a" style="left:1458px;top:1648px;height:58px;background:#1877f2"></i>
<i class="sg a" style="left:1574px;top:2016px;height:18px;background:#1185fe"></i><i class="sg a" style="left:1574px;top:1934px;height:80px;background:#000000"></i><i class="sg a" style="left:1574px;top:1914px;height:18px;background:#002b66"></i><i class="sg a" style="left:1574px;top:1892px;height:20px;background:#e60023"></i><i class="sg a" style="left:1574px;top:1872px;height:18px;background:#14171f"></i><i class="sg a" style="left:1574px;top:1852px;height:18px;background:#1da1f2"></i><i class="sg a" style="left:1574px;top:1832px;height:18px;background:#2867b2"></i><i class="sg a" style="left:1574px;top:1790px;height:40px;background:#ff0000"></i><i class="sg a" style="left:1574px;top:1770px;height:18px;background:#c13584"></i><i class="sg a" style="left:1574px;top:1730px;height:38px;background:#1877f2"></i>
<i class="sg a" style="left:1690px;top:1974px;height:60px;background:#000000"></i>
<i class="sg a" style="left:1806px;top:2016px;height:18px;background:#1185fe"></i><i class="sg a" style="left:1806px;top:1934px;height:80px;background:#000000"></i><i class="sg a" style="left:1806px;top:1914px;height:18px;background:#002b66"></i><i class="sg a" style="left:1806px;top:1892px;height:20px;background:#e60023"></i><i class="sg a" style="left:1806px;top:1852px;height:38px;background:#14171f"></i><i class="sg a" style="left:1806px;top:1832px;height:18px;background:#1da1f2"></i><i class="sg a" style="left:1806px;top:1790px;height:40px;background:#2867b2"></i><i class="sg a" style="left:1806px;top:1730px;height:58px;background:#ff0000"></i><i class="sg a" style="left:1806px;top:1688px;height:40px;background:#c13584"></i><i class="sg a" style="left:1806px;top:1606px;height:80px;background:#1877f2"></i>
<i class="sg a" style="left:1922px;top:1996px;height:38px;background:#000000"></i><i class="sg a" style="left:1922px;top:1974px;height:20px;background:#14171f"></i><i class="sg a" style="left:1922px;top:1934px;height:38px;background:#2867b2"></i><i class="sg a" style="left:1922px;top:1914px;height:18px;background:#ff0000"></i><i class="sg a" style="left:1922px;top:1852px;height:60px;background:#c13584"></i><i class="sg a" style="left:1922px;top:1832px;height:18px;background:#1877f2"></i>
<i class="sg a" style="left:2036px;top:2016px;height:18px;background:#1185fe"></i><i class="sg a" style="left:2036px;top:1934px;height:80px;background:#000000"></i><i class="sg a" style="left:2036px;top:1914px;height:18px;background:#14171f"></i><i class="sg a" style="left:2036px;top:1892px;height:20px;background:#1da1f2"></i><i class="sg a" style="left:2036px;top:1852px;height:38px;background:#2867b2"></i><i class="sg a" style="left:2036px;top:1832px;height:18px;background:#ff0000"></i><i class="sg a" style="left:2036px;top:1648px;height:182px;background:#c13584"></i><i class="sg a" style="left:2036px;top:1484px;height:162px;background:#1877f2"></i>
<i class="sg a" style="left:2152px;top:1996px;height:38px;background:#1185fe"></i><i class="sg a" style="left:2152px;top:1914px;height:80px;background:#000000"></i><i class="sg a" style="left:2152px;top:1892px;height:20px;background:#14171f"></i><i class="sg a" style="left:2152px;top:1852px;height:38px;background:#1da1f2"></i><i class="sg a" style="left:2152px;top:1790px;height:60px;background:#2867b2"></i><i class="sg a" style="left:2152px;top:1770px;height:18px;background:#ff0000"></i><i class="sg a" style="left:2152px;top:1708px;height:60px;background:#c13584"></i><i class="sg a" style="left:2152px;top:1648px;height:58px;background:#1877f2"></i>
<i class="sg a" style="left:2268px;top:1974px;height:60px;background:#000000"></i><i class="sg a" style="left:2268px;top:1954px;height:18px;background:#14171f"></i><i class="sg a" style="left:2268px;top:1934px;height:18px;background:#1da1f2"></i><i class="sg a" style="left:2268px;top:1892px;height:40px;background:#2867b2"></i><i class="sg a" style="left:2268px;top:1872px;height:18px;background:#ff0000"></i><i class="sg a" style="left:2268px;top:1812px;height:58px;background:#c13584"></i><i class="sg a" style="left:2268px;top:1790px;height:20px;background:#1877f2"></i>
<i class="sg a" style="left:2384px;top:1996px;height:38px;background:#000000"></i><i class="sg a" style="left:2384px;top:1974px;height:20px;background:#14171f"></i><i class="sg a" style="left:2384px;top:1954px;height:18px;background:#2867b2"></i><i class="sg a" style="left:2384px;top:1914px;height:38px;background:#ff0000"></i><i class="sg a" style="left:2384px;top:1892px;height:20px;background:#c13584"></i>
<i class="sg a" style="left:2500px;top:1996px;height:38px;background:#000000"></i><i class="sg a" style="left:2500px;top:1974px;height:20px;background:#14171f"></i><i class="sg a" style="left:2500px;top:1954px;height:18px;background:#2867b2"></i><i class="sg a" style="left:2500px;top:1934px;height:18px;background:#ff0000"></i><i class="sg a" style="left:2500px;top:1914px;height:18px;background:#c13584"></i>
<i class="sg a" style="left:2616px;top:2016px;height:18px;background:#1185fe"></i><i class="sg a" style="left:2616px;top:1934px;height:80px;background:#000000"></i><i class="sg a" style="left:2616px;top:1914px;height:18px;background:#14171f"></i><i class="sg a" style="left:2616px;top:1892px;height:20px;background:#1da1f2"></i><i class="sg a" style="left:2616px;top:1832px;height:58px;background:#2867b2"></i><i class="sg a" style="left:2616px;top:1790px;height:40px;background:#ff0000"></i><i class="sg a" style="left:2616px;top:1730px;height:58px;background:#c13584"></i><i class="sg a" style="left:2616px;top:1688px;height:40px;background:#1877f2"></i>
<i class="sg a" style="left:2732px;top:1974px;height:60px;background:#000000"></i><i class="sg a" style="left:2732px;top:1954px;height:18px;background:#14171f"></i><i class="sg a" style="left:2732px;top:1934px;height:18px;background:#2867b2"></i><i class="sg a" style="left:2732px;top:1914px;height:18px;background:#ff0000"></i><i class="sg a" style="left:2732px;top:1892px;height:20px;background:#c13584"></i>
<i class="sg a" style="left:2848px;top:1996px;height:38px;background:#000000"></i><i class="sg a" style="left:2848px;top:1974px;height:20px;background:#14171f"></i><i class="sg a" style="left:2848px;top:1954px;height:18px;background:#2867b2"></i><i class="sg a" style="left:2848px;top:1914px;height:38px;background:#ff0000"></i><i class="sg a" style="left:2848px;top:1892px;height:20px;background:#c13584"></i>
<i class="sg a" style="left:2964px;top:2016px;height:18px;background:#1185fe"></i><i class="sg a" style="left:2964px;top:1934px;height:80px;background:#000000"></i><i class="sg a" style="left:2964px;top:1914px;height:18px;background:#14171f"></i><i class="sg a" style="left:2964px;top:1892px;height:20px;background:#1da1f2"></i><i class="sg a" style="left:2964px;top:1832px;height:58px;background:#2867b2"></i><i class="sg a" style="left:2964px;top:1790px;height:40px;background:#ff0000"></i><i class="sg a" style="left:2964px;top:1730px;height:58px;background:#c13584"></i><i class="sg a" style="left:2964px;top:1688px;height:40px;background:#1877f2"></i>
<i class="sg a" style="left:3078px;top:1974px;height:60px;background:#000000"></i><i class="sg a" style="left:3078px;top:1954px;height:18px;background:#14171f"></i><i class="sg a" style="left:3078px;top:1934px;height:18px;background:#1da1f2"></i><i class="sg a" style="left:3078px;top:1892px;height:40px;background:#2867b2"></i><i class="sg a" style="left:3078px;top:1872px;height:18px;background:#ff0000"></i><i class="sg a" style="left:3078px;top:1812px;height:58px;background:#c13584"></i>
<i class="sg a" style="left:3194px;top:1996px;height:38px;background:#000000"></i><i class="sg a" style="left:3194px;top:1954px;height:40px;background:#e60023"></i><i class="sg a" style="left:3194px;top:1934px;height:18px;background:#14171f"></i><i class="sg a" style="left:3194px;top:1914px;height:18px;background:#2867b2"></i><i class="sg a" style="left:3194px;top:1892px;height:20px;background:#ff0000"></i><i class="sg a" style="left:3194px;top:1872px;height:18px;background:#c13584"></i>
<i class="sg a" style="left:3310px;top:1996px;height:38px;background:#000000"></i><i class="sg a" style="left:3310px;top:1974px;height:20px;background:#14171f"></i><i class="sg a" style="left:3310px;top:1954px;height:18px;background:#2867b2"></i><i class="sg a" style="left:3310px;top:1914px;height:38px;background:#ff0000"></i><i class="sg a" style="left:3310px;top:1892px;height:20px;background:#c13584"></i><i class="sg a" style="left:3310px;top:1852px;height:38px;background:#1877f2"></i>
<i class="sg a" style="left:3426px;top:1996px;height:38px;background:#000000"></i><i class="sg a" style="left:3426px;top:1974px;height:20px;background:#14171f"></i><i class="sg a" style="left:3426px;top:1954px;height:18px;background:#2867b2"></i><i class="sg a" style="left:3426px;top:1934px;height:18px;background:#ff0000"></i><i class="sg a" style="left:3426px;top:1914px;height:18px;background:#c13584"></i>
<i class="sg a" style="left:3542px;top:2016px;height:18px;background:#1185fe"></i><i class="sg a" style="left:3542px;top:1974px;height:40px;background:#000000"></i><i class="sg a" style="left:3542px;top:1954px;height:18px;background:#14171f"></i><i class="sg a" style="left:3542px;top:1934px;height:18px;background:#1da1f2"></i><i class="sg a" style="left:3542px;top:1892px;height:40px;background:#2867b2"></i><i class="sg a" style="left:3542px;top:1852px;height:38px;background:#c13584"></i><i class="sg a" style="left:3542px;top:1832px;height:18px;background:#1877f2"></i>
<div class="g" style="left:238px;top:2034px;background:#ccd3e3"></div>
<div class="a" style="left:326px;top:2036px;width:2px;height:18px;background:#ccd6eb"></div>
<div class="t" style="left:289.77px;top:2047.14px;font-size:22.66px;line-height:33px;color:#0b2c66;letter-spacing:0.489px;">28. Oct</div>
<div class="a" style="left:558px;top:2036px;width:2px;height:18px;background:#ccd6eb"></div>
<div class="t" style="left:521.77px;top:2047.14px;font-size:22.66px;line-height:33px;color:#0b2c66;letter-spacing:0.489px;">30. Oct</div>
<div class="a" style="left:790px;top:2036px;width:2px;height:18px;background:#ccd6eb"></div>
<div class="t" style="left:757.52px;top:2047.14px;font-size:22.66px;line-height:33px;color:#0b2c66;letter-spacing:0.579px;">1. Nov</div>
<div class="a" style="left:1022px;top:2036px;width:2px;height:18px;background:#ccd6eb"></div>
<div class="t" style="left:989.52px;top:2047.14px;font-size:22.66px;line-height:33px;color:#0b2c66;letter-spacing:0.579px;">3. Nov</div>
<div class="a" style="left:1252px;top:2036px;width:2px;height:18px;background:#ccd6eb"></div>
<div class="t" style="left:1219.52px;top:2047.14px;font-size:22.66px;line-height:33px;color:#0b2c66;letter-spacing:0.579px;">5. Nov</div>
<div class="a" style="left:1484px;top:2036px;width:2px;height:18px;background:#ccd6eb"></div>
<div class="t" style="left:1451.52px;top:2047.14px;font-size:22.66px;line-height:33px;color:#0b2c66;letter-spacing:0.579px;">7. Nov</div>
<div class="a" style="left:1716px;top:2036px;width:2px;height:18px;background:#ccd6eb"></div>
<div class="t" style="left:1683.52px;top:2047.14px;font-size:22.66px;line-height:33px;color:#0b2c66;letter-spacing:0.579px;">9. Nov</div>
<div class="a" style="left:1948px;top:2036px;width:2px;height:18px;background:#ccd6eb"></div>
<div class="t" style="left:1909.22px;top:2047.14px;font-size:22.66px;line-height:33px;color:#0b2c66;letter-spacing:0.734px;">11. Nov</div>
<div class="a" style="left:2178px;top:2036px;width:2px;height:18px;background:#ccd6eb"></div>
<div class="t" style="left:2139.22px;top:2047.14px;font-size:22.66px;line-height:33px;color:#0b2c66;letter-spacing:0.494px;">13. Nov</div>
<div class="a" style="left:2410px;top:2036px;width:2px;height:18px;background:#ccd6eb"></div>
<div class="t" style="left:2371.22px;top:2047.14px;font-size:22.66px;line-height:33px;color:#0b2c66;letter-spacing:0.494px;">15. Nov</div>
<div class="a" style="left:2642px;top:2036px;width:2px;height:18px;background:#ccd6eb"></div>
<div class="t" style="left:2603.22px;top:2047.14px;font-size:22.66px;line-height:33px;color:#0b2c66;letter-spacing:0.494px;">17. Nov</div>
<div class="a" style="left:2874px;top:2036px;width:2px;height:18px;background:#ccd6eb"></div>
<div class="t" style="left:2835.22px;top:2047.14px;font-size:22.66px;line-height:33px;color:#0b2c66;letter-spacing:0.494px;">19. Nov</div>
<div class="a" style="left:3104px;top:2036px;width:2px;height:18px;background:#ccd6eb"></div>
<div class="t" style="left:3065.22px;top:2047.14px;font-size:22.66px;line-height:33px;color:#0b2c66;letter-spacing:0.494px;">21. Nov</div>
<div class="a" style="left:3336px;top:2036px;width:2px;height:18px;background:#ccd6eb"></div>
<div class="t" style="left:3297.22px;top:2047.14px;font-size:22.66px;line-height:33px;color:#0b2c66;letter-spacing:0.494px;">23. Nov</div>
<div class="a" style="left:3568px;top:2036px;width:2px;height:18px;background:#ccd6eb"></div>
<div class="t" style="left:3529.22px;top:2047.14px;font-size:22.66px;line-height:33px;color:#0b2c66;letter-spacing:0.494px;">25. Nov</div>
</div>
</div>
</main>
<div class="a" style="left:3754px;top:52px;width:40px;height:40px;border-radius:20px;background:#fff"></div>
<svg class="a" style="left:3763px;top:61px" width="22" height="22" viewBox="0 0 22 22" fill="none" stroke="#7d8097" stroke-width="2.400" stroke-linecap="round"><path d="M3 3l16 16M19 3 3 19"/></svg>
</body>
</html>
